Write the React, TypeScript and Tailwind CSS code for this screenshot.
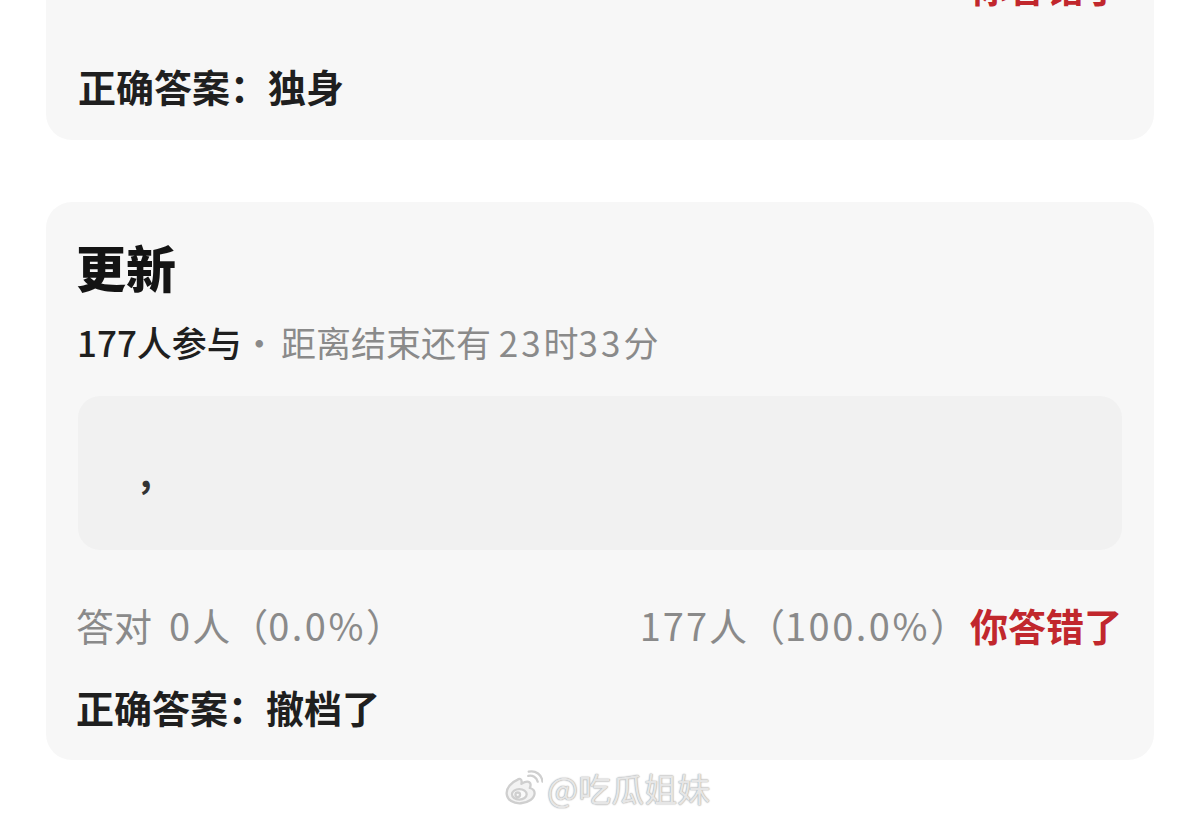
import React from "react";

const font = { fontFamily: '"Noto Sans CJK SC", "Noto Sans", sans-serif' };

function WeiboLogo() {
  return (
    <svg width="40" height="38" viewBox="0 0 38 36" fill="none">
      <g stroke="#cfcfcf" strokeWidth="2.2" strokeLinecap="round" strokeLinejoin="round">
        <path d="M14 10c-6 2.5-11 8-10.5 13.5C4 29.5 10 33 17 32.5c7-0.5 13-4.5 13-9.5 0-3-2.5-4.5-4.5-5 1-2.5 1-4.5-0.5-5.5-2-1.2-5 0-7.5 1.5 0.5-2.5 0-4-1-4.5-1-0.4-2 0-2.5 0.5z" fill="#f3f3f3" />
        <ellipse cx="15.5" cy="24" rx="7" ry="5" fill="#fafafa" />
        <circle cx="14" cy="24.5" r="2.2" />
        <path d="M24 6.5c4-1 8 1.5 9 5.5" />
        <path d="M24.5 2.5c6.5-1.5 12.5 3 13 9.5" />
      </g>
    </svg>
  );
}

export default function App() {
  return (
    <div className="relative w-[1200px] h-[816px] overflow-hidden bg-white" style={font}>
      <div className="px-[46px]">
        {/* Card 1 (cut off at top) */}
        <div className="-mt-[72px] rounded-[26px] bg-[#f7f7f7] px-[32px] pt-[34px] pb-[30px]">
          <div className="flex h-[48px] items-center justify-end">
            <span className="text-[38px] leading-[48px] font-bold text-[#c1272d]">你答错了</span>
          </div>
          <div className="mt-[52px] h-[48px] text-[38px] leading-[48px] font-bold text-[#1f1f1f]">
            正确答案：独身
          </div>
        </div>

        {/* Card 2 */}
        <div className="mt-[62px] rounded-[26px] bg-[#f7f7f7] px-[32px] pt-[36px] pb-[29px]">
          <div className="h-[56px] text-[50px] leading-[56px] font-black text-[#141414] -ml-[2px]">更新</div>
          <div className="mt-[26px] h-[44px] text-[35px] leading-[44px] whitespace-nowrap -ml-[1px] flex items-center">
            <span className="text-[#1f1f1f] font-medium">177人参与</span>
            <span className="text-[#8a8a8a] mr-[4px]">·</span>
            <span className="text-[#8a8a8a]">距离结束还有 <span className="tracking-[3px]">23</span>时<span className="tracking-[3px]">33</span>分</span>
          </div>
          <div className="mt-[32px] h-[154px] rounded-[22px] bg-[#f1f1f1] pl-[62px] flex items-center">
            <span className="text-[36px] leading-[44px] font-bold text-[#333] translate-y-[-2px]">,</span>
          </div>
          <div className="mt-[51px] flex h-[48px] items-center justify-between text-[38px] leading-[48px] -ml-[2px]">
            <span className="text-[#8a8a8a]">答对&nbsp;&nbsp;<span className="tracking-[2px]">0</span>人（<span className="tracking-[2.5px]">0.0%</span>）</span>
            <span className="flex items-center">
              <span className="text-[#8a8a8a]"><span className="tracking-[2px]">177</span>人（<span className="tracking-[2.5px]">100.0%</span>）</span>
              <span className="ml-[2px] font-bold text-[#c1272d]">你答错了</span>
            </span>
          </div>
          <div className="mt-[34px] h-[48px] text-[38px] leading-[48px] font-bold text-[#1f1f1f] -ml-[2px]">
            正确答案：撤档了
          </div>
        </div>
      </div>

      {/* Watermark */}
      <div className="absolute left-[503px] top-[768px] flex items-center gap-[4px]">
        <WeiboLogo />
        <span className="text-[33px] leading-[40px] text-[#e6e6e6] [text-shadow:0_0_1px_#9a9a9a,0_0_2px_#c0c0c0]">
          @吃瓜姐妹
        </span>
      </div>
    </div>
  );
}
